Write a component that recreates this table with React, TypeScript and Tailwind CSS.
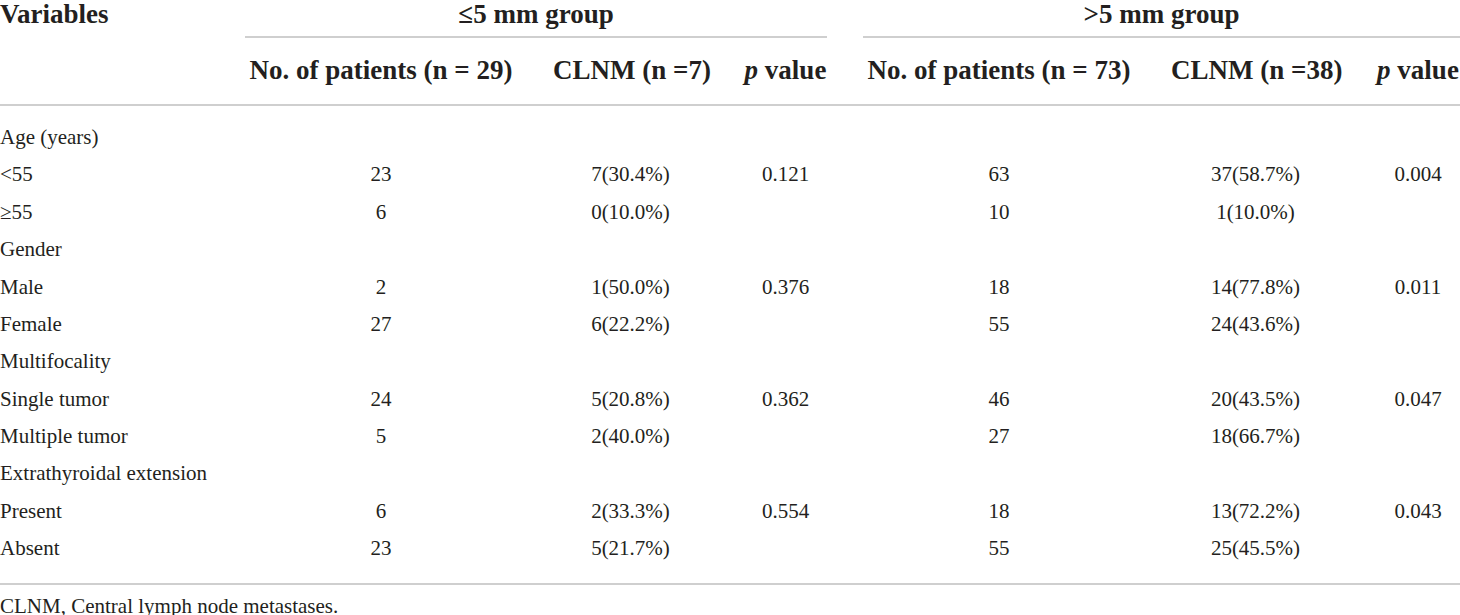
const cols =
  "grid grid-cols-[209px_272px_155px_83px_272px_169px_1fr] gap-x-[36px]";

type Row = { label: string; cells?: string[] };

const rows: Row[] = [
  { label: "Age (years)" },
  { label: "<55", cells: ["23", "7(30.4%)", "0.121", "63", "37(58.7%)", "0.004"] },
  { label: "≥55", cells: ["6", "0(10.0%)", "", "10", "1(10.0%)", ""] },
  { label: "Gender" },
  { label: "Male", cells: ["2", "1(50.0%)", "0.376", "18", "14(77.8%)", "0.011"] },
  { label: "Female", cells: ["27", "6(22.2%)", "", "55", "24(43.6%)", ""] },
  { label: "Multifocality" },
  { label: "Single tumor", cells: ["24", "5(20.8%)", "0.362", "46", "20(43.5%)", "0.047"] },
  { label: "Multiple tumor", cells: ["5", "2(40.0%)", "", "27", "18(66.7%)", ""] },
  { label: "Extrathyroidal extension" },
  { label: "Present", cells: ["6", "2(33.3%)", "0.554", "18", "13(72.2%)", "0.043"] },
  { label: "Absent", cells: ["23", "5(21.7%)", "", "55", "25(45.5%)", ""] },
];

const PValue = () => (
  <span>
    <i>p</i> value
  </span>
);

export default function App() {
  return (
    <div
      className="w-[1460px] h-[615px] bg-white text-[#231f20] overflow-hidden"
      style={{ fontFamily: '"Liberation Serif", "Times New Roman", serif' }}
    >
      {/* header */}
      <div className="border-b-2 border-[#cfcfcf] font-bold text-[27px]">
        <div className={`${cols} h-[38px] leading-[28px]`}>
          <div className="whitespace-nowrap">Variables</div>
          <div className="col-span-3 border-b-2 border-[#cfcfcf] text-center">
            ≤5 mm group
          </div>
          <div className="col-span-3 border-b-2 border-[#cfcfcf] text-center">
            &gt;5 mm group
          </div>
        </div>
        <div className={`${cols} h-[66px] items-center pb-[2px] leading-none whitespace-nowrap`}>
          <div />
          <div className="text-center">No. of patients (n = 29)</div>
          <div className="text-center">CLNM (n =7)</div>
          <div className="text-center">
            <PValue />
          </div>
          <div className="text-center">No. of patients (n = 73)</div>
          <div className="text-center">CLNM (n =38)</div>
          <div className="text-center">
            <PValue />
          </div>
        </div>
      </div>

      {/* body */}
      <div className="border-b-2 border-[#cfcfcf] pt-[13px] pb-[15px] text-[21px]">
        {rows.map((r) => (
          <div key={r.label} className={`${cols} h-[37.4px] items-center whitespace-nowrap`}>
            <div>{r.label}</div>
            {(r.cells ?? ["", "", "", "", "", ""]).map((c, i) => (
              <div key={i} className="text-center">
                {c}
              </div>
            ))}
          </div>
        ))}
      </div>

      <div className="text-[21px] leading-[24px] pt-[9px]">CLNM, Central lymph node metastases.</div>
    </div>
  );
}
